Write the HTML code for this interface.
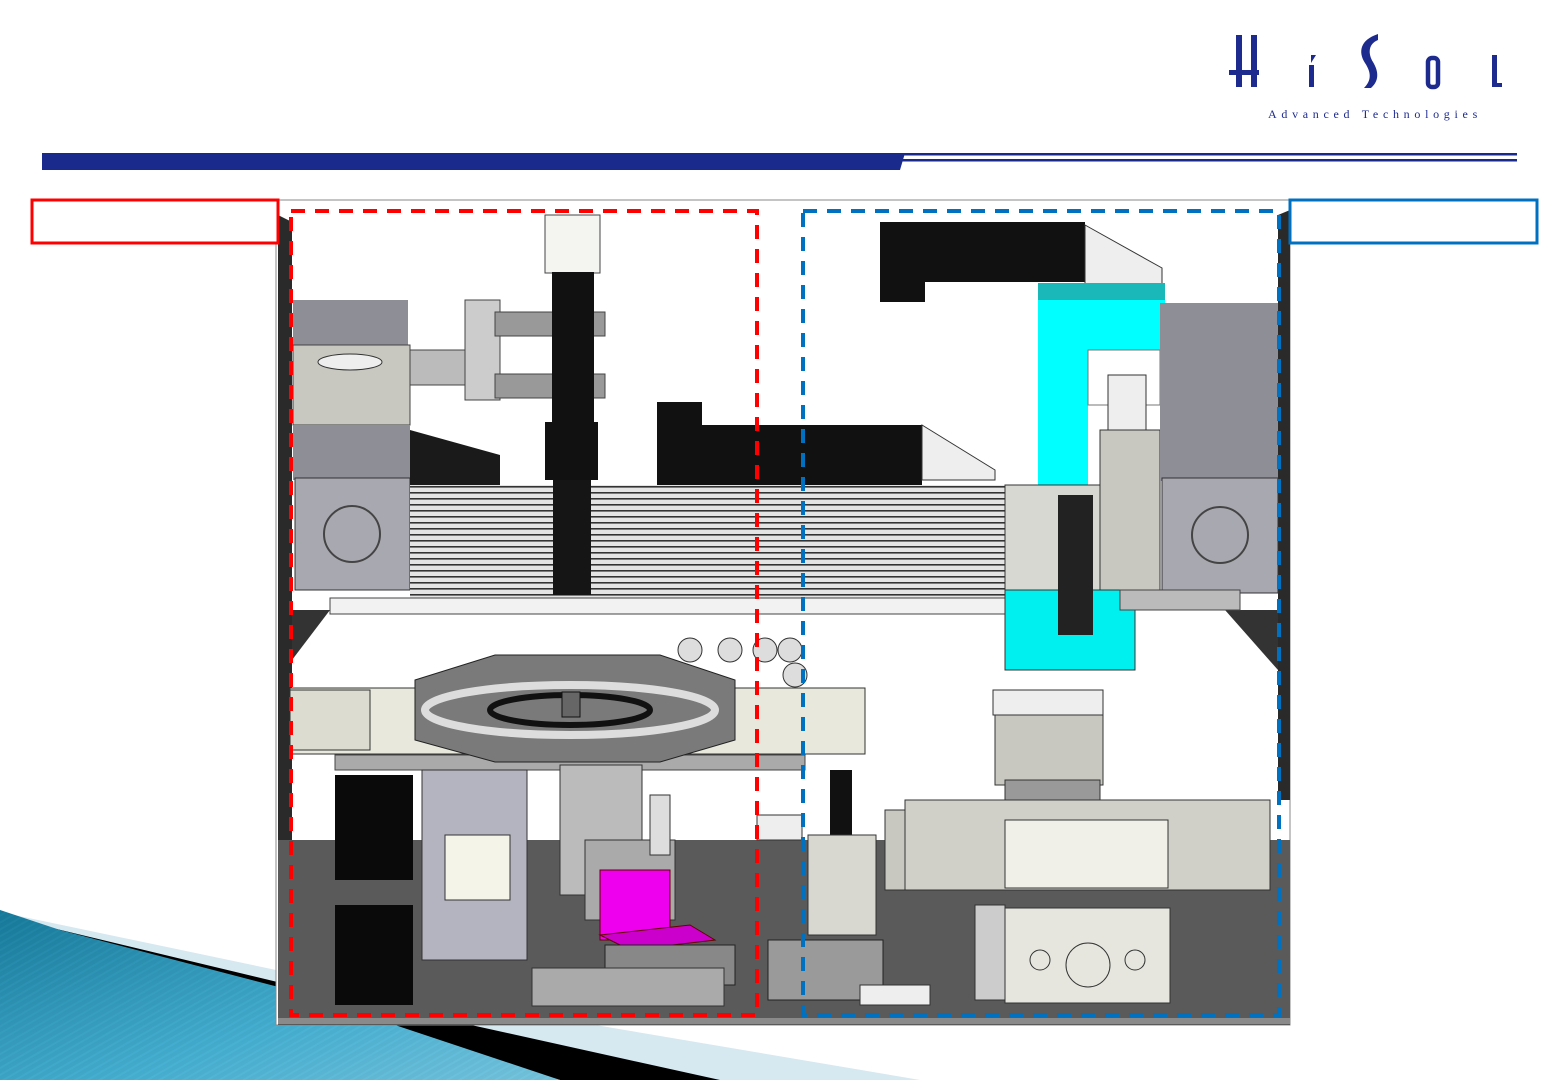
<!DOCTYPE html>
<html><head><meta charset="utf-8"><style>
html,body{margin:0;padding:0;background:#fff;width:1560px;height:1080px;overflow:hidden;position:relative;font-family:"Liberation Sans",sans-serif}
svg{position:absolute;left:0;top:0}
</style></head><body>
<svg width="1560" height="1080" viewBox="0 0 1560 1080">
<defs>
<pattern id="rail" width="8" height="6" patternUnits="userSpaceOnUse"><rect width="8" height="6" fill="#e4e4e4"/><rect y="0" width="8" height="1.6" fill="#333"/></pattern>
<pattern id="teal" width="6" height="6" patternUnits="userSpaceOnUse" patternTransform="rotate(60)"><rect width="6" height="6" fill="#2a8fb0"/><rect width="2" height="6" fill="#3aa6c6"/></pattern>
<linearGradient id="tg" x1="0" y1="0" x2="1" y2="1"><stop offset="0" stop-color="#0f6f90"/><stop offset="0.6" stop-color="#4cb4d6"/><stop offset="1" stop-color="#8cd0e6"/></linearGradient>
</defs>
<rect x="42" y="153" width="1475" height="2.5" fill="#1a2a8c"/>
<rect x="42" y="159" width="1475" height="2.5" fill="#1a2a8c"/>
<polygon points="42,153 905,153 900,170 42,170" fill="#1a2a8c"/>
<g fill="#1d2a8e">
<rect x="1236" y="35" width="6" height="52"/><rect x="1251" y="35" width="6" height="52"/><rect x="1229" y="70" width="30" height="5"/>
<rect x="1309" y="65" width="5" height="22"/><polygon points="1311,55 1316,55 1311,63"/>
<path d="M1378,34 L1378,40 C1368,44 1368,54 1373,62 C1379,72 1379,81 1371,88 L1364,88 C1372,80 1371,72 1365,63 C1358,52 1360,40 1378,34 Z"/>
<rect x="1428" y="58" width="10" height="29" rx="4" fill="none" stroke="#1d2a8e" stroke-width="4.5"/>
<rect x="1492" y="55" width="5" height="32"/><rect x="1492" y="83" width="10" height="4"/>
</g>
<text x="1268" y="118" font-family="Liberation Serif,serif" font-size="12" fill="#1d2a8e" letter-spacing="4.7">Advanced Technologies</text>
<polygon points="0,912 300,975 920,1080 0,1080" fill="#d6e8f0"/>
<polygon points="40,925 290,985 720,1080 560,1080" fill="#000"/>
<polygon points="0,910 60,930 290,990 560,1080 0,1080" fill="url(#tg)"/>
<polygon points="0,910 60,930 290,990 560,1080 0,1080" fill="url(#teal)" opacity="0.25"/>
<rect x="276" y="200" width="1014" height="825" fill="#fff" stroke="#888" stroke-width="1"/>
<polygon points="278,215 292,222 292,1020 278,1022" fill="#2a2a2a"/>
<polygon points="1278,215 1290,210 1290,800 1278,800" fill="#2a2a2a"/>
<polygon points="292,610 330,610 292,660" fill="#333"/>
<polygon points="1225,610 1278,610 1278,670" fill="#333"/>
<rect x="278" y="840" width="1012" height="185" fill="#5a5a5a"/>
<rect x="278" y="1018" width="1012" height="6" fill="#8a8a8a"/>
<rect x="293" y="300" width="115" height="50" fill="#8e8e96"/>
<rect x="293" y="345" width="117" height="80" fill="#c8c8c0" stroke="#444"/>
<ellipse cx="350" cy="362" rx="32" ry="8" fill="#eee" stroke="#333"/>
<rect x="293" y="425" width="117" height="55" fill="#8e8e96"/>
<rect x="295" y="478" width="115" height="112" fill="#a8a8b0" stroke="#333"/>
<circle cx="352" cy="534" r="28" fill="none" stroke="#444" stroke-width="2"/>
<polygon points="410,430 500,455 500,490 410,490" fill="#1a1a1a"/>
<rect x="657" y="402" width="45" height="85" fill="#111"/>
<rect x="700" y="425" width="222" height="62" fill="#111"/>
<polygon points="922,425 995,470 995,480 922,480" fill="#eee" stroke="#333"/>
<rect x="880" y="222" width="205" height="60" fill="#111"/>
<rect x="880" y="282" width="45" height="20" fill="#111"/>
<polygon points="1085,225 1162,268 1162,285 1085,285" fill="#eee" stroke="#333"/>
<rect x="410" y="485" width="600" height="115" fill="url(#rail)"/>
<rect x="330" y="598" width="680" height="16" fill="#f2f2f2" stroke="#444"/>
<rect x="410" y="350" width="60" height="35" fill="#bbb" stroke="#444"/>
<rect x="465" y="300" width="35" height="100" fill="#ccc" stroke="#444"/>
<rect x="495" y="312" width="110" height="24" fill="#999" stroke="#444"/>
<rect x="495" y="374" width="110" height="24" fill="#999" stroke="#444"/>
<rect x="545" y="215" width="55" height="58" fill="#f4f4f0" stroke="#444"/>
<rect x="552" y="272" width="42" height="150" fill="#111"/>
<rect x="545" y="422" width="53" height="58" fill="#111"/>
<rect x="553" y="480" width="38" height="115" fill="#151515"/>
<rect x="1038" y="283" width="127" height="20" fill="#1ab8b8"/>
<rect x="1038" y="300" width="127" height="50" fill="#00ffff"/>
<rect x="1038" y="350" width="50" height="240" fill="#00ffff"/>
<rect x="1088" y="350" width="72" height="55" fill="#fff" stroke="#777"/>
<rect x="1005" y="485" width="100" height="105" fill="#d8d8d2" stroke="#333"/>
<rect x="1100" y="430" width="60" height="180" fill="#c8c8c0" stroke="#333"/>
<rect x="1005" y="590" width="130" height="80" fill="#00f0f0" stroke="#333"/>
<rect x="1058" y="495" width="35" height="140" fill="#222"/>
<rect x="1108" y="375" width="38" height="55" fill="#eee" stroke="#333"/>
<rect x="1160" y="303" width="118" height="178" fill="#8e8e96"/>
<rect x="1162" y="478" width="116" height="115" fill="#a8a8b0" stroke="#333"/>
<circle cx="1220" cy="535" r="28" fill="none" stroke="#444" stroke-width="2"/>
<rect x="1120" y="590" width="120" height="20" fill="#bbb" stroke="#444"/>
<rect x="290" y="688" width="575" height="66" fill="#e8e8dc" stroke="#333"/>
<rect x="290" y="690" width="80" height="60" fill="#dcdcd0" stroke="#333"/>
<rect x="335" y="755" width="470" height="15" fill="#aaa" stroke="#444"/>
<polygon points="415,680 495,655 660,655 735,680 735,740 660,762 495,762 415,740" fill="#7a7a7a" stroke="#222"/>
<ellipse cx="570" cy="710" rx="145" ry="25" fill="none" stroke="#ddd" stroke-width="8"/>
<ellipse cx="570" cy="710" rx="80" ry="15" fill="none" stroke="#111" stroke-width="6"/>
<rect x="562" y="692" width="18" height="25" fill="#666" stroke="#111"/>
<g fill="#ddd" stroke="#333"><circle cx="690" cy="650" r="12"/><circle cx="730" cy="650" r="12"/><circle cx="765" cy="650" r="12"/><circle cx="790" cy="650" r="12"/><circle cx="795" cy="675" r="12"/></g>
<rect x="335" y="775" width="78" height="105" fill="#0a0a0a"/>
<rect x="335" y="905" width="78" height="100" fill="#0a0a0a"/>
<rect x="422" y="770" width="105" height="190" fill="#b4b4c0" stroke="#333"/>
<rect x="445" y="835" width="65" height="65" fill="#f4f4e8" stroke="#333"/>
<rect x="560" y="765" width="82" height="130" fill="#bbb" stroke="#333"/>
<rect x="585" y="840" width="90" height="80" fill="#aaa" stroke="#333"/>
<rect x="600" y="870" width="70" height="70" fill="#ee00ee" stroke="#600"/>
<polygon points="600,935 690,925 715,940 630,950" fill="#cc00cc" stroke="#600"/>
<rect x="605" y="945" width="130" height="40" fill="#888" stroke="#222"/>
<rect x="532" y="968" width="192" height="38" fill="#aaa" stroke="#333"/>
<rect x="650" y="795" width="20" height="60" fill="#ddd" stroke="#333"/>
<rect x="830" y="770" width="22" height="65" fill="#111"/>
<rect x="757" y="815" width="45" height="25" fill="#eee" stroke="#333"/>
<rect x="808" y="835" width="68" height="100" fill="#d8d8d0" stroke="#333"/>
<rect x="768" y="940" width="115" height="60" fill="#9a9a9a" stroke="#222"/>
<rect x="860" y="985" width="70" height="20" fill="#eee" stroke="#333"/>
<rect x="995" y="715" width="108" height="70" fill="#c8c8c0" stroke="#333"/>
<rect x="993" y="690" width="110" height="25" fill="#eee" stroke="#333"/>
<rect x="1005" y="780" width="95" height="50" fill="#999" stroke="#333"/>
<rect x="885" y="810" width="120" height="80" fill="#c8c8c0" stroke="#333"/>
<rect x="905" y="800" width="365" height="90" fill="#d0d0c8" stroke="#333"/>
<rect x="1005" y="820" width="163" height="68" fill="#f0f0e8" stroke="#333"/>
<rect x="975" y="905" width="30" height="95" fill="#ccc" stroke="#333"/>
<rect x="1005" y="908" width="165" height="95" fill="#e6e6de" stroke="#333"/>
<circle cx="1088" cy="965" r="22" fill="none" stroke="#333"/>
<circle cx="1040" cy="960" r="10" fill="none" stroke="#333"/>
<circle cx="1135" cy="960" r="10" fill="none" stroke="#333"/>
<rect x="291" y="211" width="466" height="804" fill="none" stroke="#ff0000" stroke-width="4" stroke-dasharray="14,10"/>
<rect x="803" y="211" width="476" height="804" fill="none" stroke="#0070c0" stroke-width="4" stroke-dasharray="14,10"/>
<rect x="32" y="200" width="246" height="43" fill="#fff" stroke="#ff0000" stroke-width="3"/>
<rect x="1290" y="200" width="247" height="43" fill="#fff" stroke="#0070c0" stroke-width="3"/>
</svg>
</body></html>
